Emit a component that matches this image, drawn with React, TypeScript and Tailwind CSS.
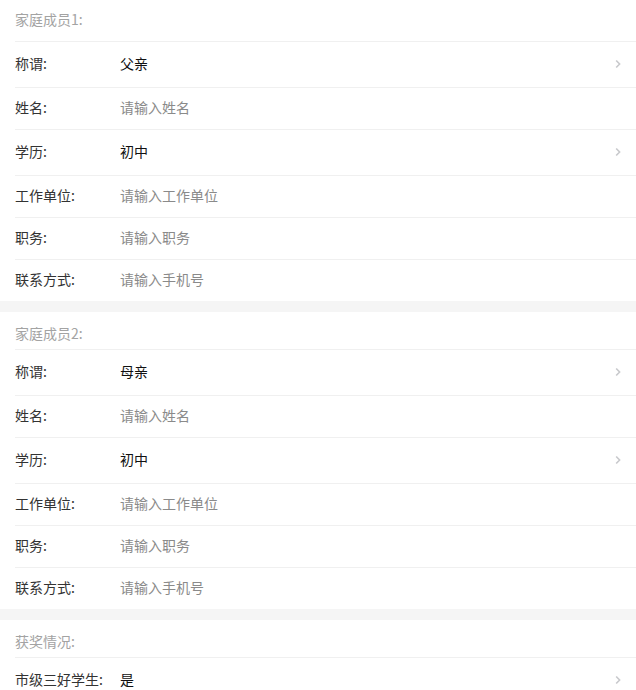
import React from 'react';

type Row = { label: string; value?: string; placeholder?: string; select?: boolean };

const family = (n: number): Row[] => [
    { label: '称谓:', value: n === 1 ? '父亲' : '母亲', select: true },
    { label: '姓名:', placeholder: '请输入姓名' },
    { label: '学历:', value: '初中', select: true },
    { label: '工作单位:', placeholder: '请输入工作单位' },
    { label: '职务:', placeholder: '请输入职务' },
    { label: '联系方式:', placeholder: '请输入手机号' },
];

const Arrow = () => (
    <svg width="6" height="10" viewBox="0 0 6 10" className="shrink-0 mb-[1px]">
        <path d="M1.2 1.5 L4.6 5 L1.2 8.5" fill="none" stroke="#c8c9cc" strokeWidth="1.6" />
    </svg>
);

const Cell = ({ row }: { row: Row }) => (
    <div className="ml-[15px] border-t border-[#f0f0f0] pr-[15px] flex items-center">
        <div className={`flex-1 flex items-center pb-[4px] ${row.select ? 'h-[45px]' : 'h-[41px]'}`}>
            <div className="w-[105px] shrink-0 text-[#333]">{row.label}</div>
            {row.value
                ? <div className="flex-1 text-[#111]">{row.value}</div>
                : <div className="flex-1 text-[#8a8a8a]">{row.placeholder}</div>}
        </div>
        {row.select && <Arrow />}
    </div>
);

const Section = ({ title, rows, first }: { title: string; rows: Row[]; first?: boolean }) => (
    <div className="bg-white">
        <div className={`px-[15px] text-[#a3a3a3] flex items-center ${first ? 'h-[41px] pb-[3px]' : 'h-[37px] pt-[5px]'}`}>{title}</div>
        {rows.map((r, i) => <Cell key={i} row={r} />)}
    </div>
);

export default function App() {
    return (
        <div
            className="w-[636px] h-[690px] overflow-hidden bg-white text-[14px] leading-[20px]"
            style={{ fontFamily: '"Noto Sans CJK SC", "Noto Sans", sans-serif' }}
        >
            <Section first title="家庭成员1:" rows={family(1)} />
            <div className="h-[11px] bg-[#f5f5f5]" />
            <Section title="家庭成员2:" rows={family(2)} />
            <div className="h-[11px] bg-[#f5f5f5]" />
            <Section title="获奖情况:" rows={[{ label: '市级三好学生:', value: '是', select: true }]} />
        </div>
    );
}
